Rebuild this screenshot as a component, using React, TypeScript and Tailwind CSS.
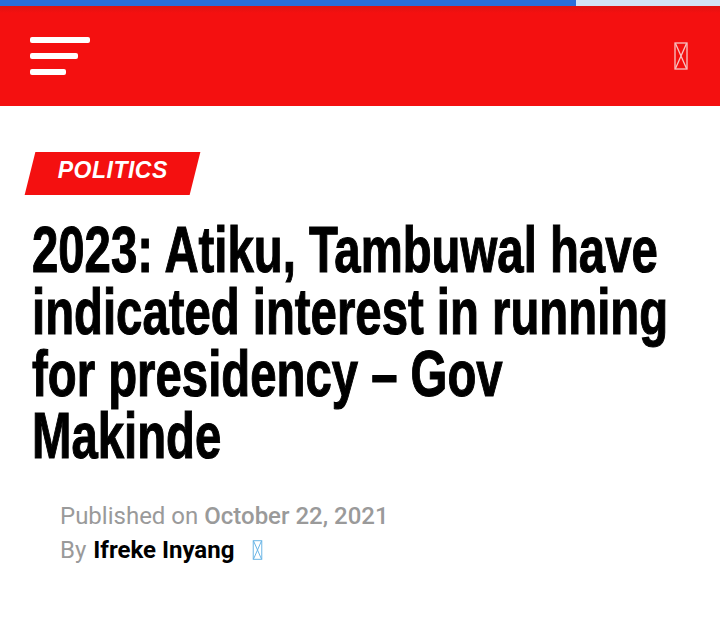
const HEADLINE = [
  "2023: Atiku, Tambuwal have",
  "indicated interest in running",
  "for presidency – Gov",
  "Makinde",
];

function Tofu({ className }: { className: string }) {
  return (
    <svg viewBox="0 0 14 28" className={className} fill="none" stroke="currentColor" strokeWidth="1.3">
      <rect x="1" y="1" width="12" height="26" />
      <path d="M1.5 1.5 L12.5 26.5 M12.5 1.5 L1.5 26.5" />
    </svg>
  );
}

export default function App() {
  return (
    <div className="min-h-[625px] overflow-hidden bg-white font-['Roboto',sans-serif]">
      <div className="flex h-[6px]">
        <div className="w-[576px] bg-[#2a6edb]" />
        <div className="flex-1 bg-[#d3e2f6]" />
      </div>

      <header className="flex h-[100px] items-center justify-between bg-[linear-gradient(to_bottom,#df1212,#f41010_7px)] pl-[30px] pr-[32px]">
        <button type="button" aria-label="Menu" className="flex flex-col gap-[10px]">
          <span className="block h-[6px] w-[60px] rounded-[2px] bg-white" />
          <span className="block h-[6px] w-[48px] rounded-[2px] bg-white" />
          <span className="block h-[6px] w-[36px] rounded-[2px] bg-white" />
        </button>
        <Tofu className="h-[28px] w-[14px] text-[#f7c4c4]" />
      </header>

      <div className="pt-[46px]">
        <div className="ml-[30px] flex h-[43px] w-[165px] -skew-x-[14deg] items-center bg-[#f41010] pb-[7px] pl-[27px]">
          <span className="skew-x-[14deg] font-['Liberation_Sans',Arial,sans-serif] text-[23px] font-bold italic leading-none tracking-[0.5px] text-white">
            POLITICS
          </span>
        </div>
      </div>

      <h1 className="mt-[23px] pl-[32px] font-['Liberation_Sans',Arial,sans-serif] text-[57px] font-bold leading-[62px] text-black [-webkit-text-stroke:1px_#000]">
        {HEADLINE.map((line) => (
          <div key={line} className="origin-left scale-x-[0.83] scale-y-[1.15] whitespace-nowrap">
            {line}
          </div>
        ))}
      </h1>

      <div className="mt-[33px] pl-[60px] text-[24px] leading-[34px] text-[#9a9a9a]">
        <p>
          Published on <span className="font-medium">October 22, 2021</span>
        </p>
        <p className="flex items-center">
          By <span className="ml-[7px] font-bold text-black">Ifreke Inyang</span>
          <Tofu className="ml-[17px] h-[20px] w-[13px] text-[#5fb0e4]" />
        </p>
      </div>
    </div>
  );
}
